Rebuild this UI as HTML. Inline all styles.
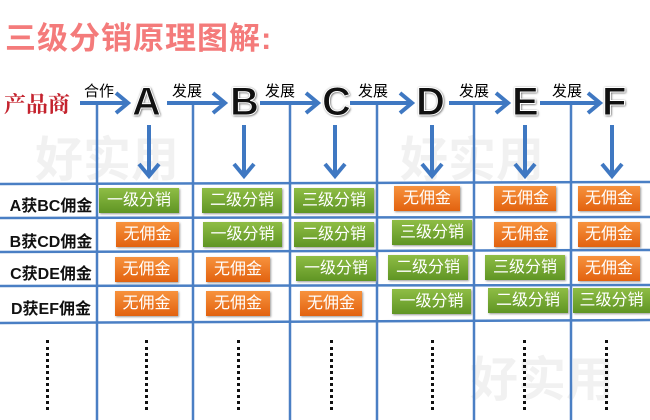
<!DOCTYPE html><html><head><meta charset="utf-8"><style>
body{margin:0;width:650px;height:420px;background:#fff;position:relative;overflow:hidden;font-family:"Liberation Sans","Noto Sans CJK SC",sans-serif}
.a{position:absolute}
.t{left:5px;top:13px;font-size:31px;color:#f47b7b;letter-spacing:1px;white-space:nowrap;font-weight:bold}
.p{left:4px;top:88px;font-size:22px;font-weight:bold;color:#c4232e;font-family:"Liberation Serif","Noto Serif CJK SC",serif}
.lab{font-size:15px;color:#000;white-space:nowrap}
.L{font-size:40px;font-weight:bold;color:#111;-webkit-text-stroke:1px #fff;text-shadow:0 0 2px #888,1px 1px 2px #666;line-height:1}
.rl{font-size:16px;font-weight:bold;color:#111;left:6px;width:90px;text-align:center}
.b{height:25px;line-height:25px;color:#fff;font-size:16px;text-align:center;white-space:nowrap;box-shadow:1px 1px 2px #999}
.g{background:linear-gradient(#8fbd45,#5f9524)}
.o{background:linear-gradient(#f7923d,#e2620f)}
.dot{width:0;border-left:3px dotted #111;top:340px;height:70px}
.wm{color:#000;opacity:.05;font-size:48px;font-weight:bold}
</style></head><body>
<div class="a t">三级分销原理图解:</div>
<div class="a p">产品商</div>
<div class="a wm" style="left:35px;top:120px">好实用</div>
<div class="a wm" style="left:400px;top:120px">好实用</div>
<div class="a wm" style="left:470px;top:340px">好实用</div>
<svg class="a" style="left:0;top:0" width="650" height="420">
<g stroke="#4a7fc4" stroke-width="2.5" fill="none">
<line x1="0" y1="184" x2="650" y2="182"/><line x1="0" y1="218" x2="650" y2="217"/>
<line x1="0" y1="252" x2="650" y2="250"/><line x1="0" y1="286" x2="650" y2="285"/>
<line x1="0" y1="323" x2="650" y2="320"/>
<line x1="97" y1="103" x2="97" y2="420"/><line x1="193" y1="103" x2="193" y2="420"/>
<line x1="290" y1="103" x2="290" y2="420"/><line x1="377" y1="103" x2="377" y2="420"/>
<line x1="474" y1="103" x2="474" y2="420"/><line x1="571" y1="103" x2="571" y2="420"/>
</g>
<g stroke="#3f78c2" stroke-width="4" fill="none">
<path d="M80 103H128M116 93l12 10-12 10"/>
<path d="M167 103H225M213 93l12 10-12 10"/>
<path d="M260 103H318M306 93l12 10-12 10"/>
<path d="M350 103H412M400 93l12 10-12 10"/>
<path d="M449 103H508M496 93l12 10-12 10"/>
<path d="M540 103H600M588 93l12 10-12 10"/>
<path d="M149 125V176M139 164l10 12 10-12"/>
<path d="M244 125V176M234 164l10 12 10-12"/>
<path d="M335 125V176M325 164l10 12 10-12"/>
<path d="M432 125V176M422 164l10 12 10-12"/>
<path d="M525 125V176M515 164l10 12 10-12"/>
<path d="M612 125V176M602 164l10 12 10-12"/>
</g></svg>
<div class="a lab" style="left:84px;top:80px">合作</div>
<div class="a lab" style="left:172px;top:80px">发展</div>
<div class="a lab" style="left:265px;top:80px">发展</div>
<div class="a lab" style="left:358px;top:80px">发展</div>
<div class="a lab" style="left:459px;top:80px">发展</div>
<div class="a lab" style="left:552px;top:80px">发展</div>
<div class="a L" style="left:132px;top:82px">A</div>
<div class="a L" style="left:230px;top:82px">B</div>
<div class="a L" style="left:322px;top:82px">C</div>
<div class="a L" style="left:416px;top:82px">D</div>
<div class="a L" style="left:512px;top:82px">E</div>
<div class="a L" style="left:602px;top:82px">F</div>
<div class="a rl" style="top:192px">A获BC佣金</div>
<div class="a rl" style="top:228px">B获CD佣金</div>
<div class="a rl" style="top:260px">C获DE佣金</div>
<div class="a rl" style="top:295px">D获EF佣金</div>
<div class="a b g" style="left:99px;top:188px;width:80px">一级分销</div>
<div class="a b g" style="left:202px;top:188px;width:80px">二级分销</div>
<div class="a b g" style="left:294px;top:188px;width:80px">三级分销</div>
<div class="a b o" style="left:394px;top:186px;width:66px">无佣金</div>
<div class="a b o" style="left:494px;top:186px;width:62px">无佣金</div>
<div class="a b o" style="left:578px;top:186px;width:62px">无佣金</div>
<div class="a b o" style="left:116px;top:222px;width:63px">无佣金</div>
<div class="a b g" style="left:203px;top:222px;width:79px">一级分销</div>
<div class="a b g" style="left:294px;top:222px;width:80px">二级分销</div>
<div class="a b g" style="left:392px;top:220px;width:80px">三级分销</div>
<div class="a b o" style="left:494px;top:222px;width:62px">无佣金</div>
<div class="a b o" style="left:578px;top:222px;width:62px">无佣金</div>
<div class="a b o" style="left:115px;top:257px;width:63px">无佣金</div>
<div class="a b o" style="left:206px;top:257px;width:64px">无佣金</div>
<div class="a b g" style="left:296px;top:256px;width:80px">一级分销</div>
<div class="a b g" style="left:388px;top:255px;width:80px">二级分销</div>
<div class="a b g" style="left:485px;top:255px;width:80px">三级分销</div>
<div class="a b o" style="left:578px;top:256px;width:62px">无佣金</div>
<div class="a b o" style="left:115px;top:291px;width:63px">无佣金</div>
<div class="a b o" style="left:206px;top:291px;width:64px">无佣金</div>
<div class="a b o" style="left:300px;top:291px;width:62px">无佣金</div>
<div class="a b g" style="left:392px;top:289px;width:79px">一级分销</div>
<div class="a b g" style="left:488px;top:288px;width:80px">二级分销</div>
<div class="a b g" style="left:573px;top:288px;width:77px">三级分销</div>
<div class="a dot" style="left:46px"></div>
<div class="a dot" style="left:145px"></div>
<div class="a dot" style="left:237px"></div>
<div class="a dot" style="left:330px"></div>
<div class="a dot" style="left:431px"></div>
<div class="a dot" style="left:523px"></div>
<div class="a dot" style="left:605px"></div>
</body></html>
